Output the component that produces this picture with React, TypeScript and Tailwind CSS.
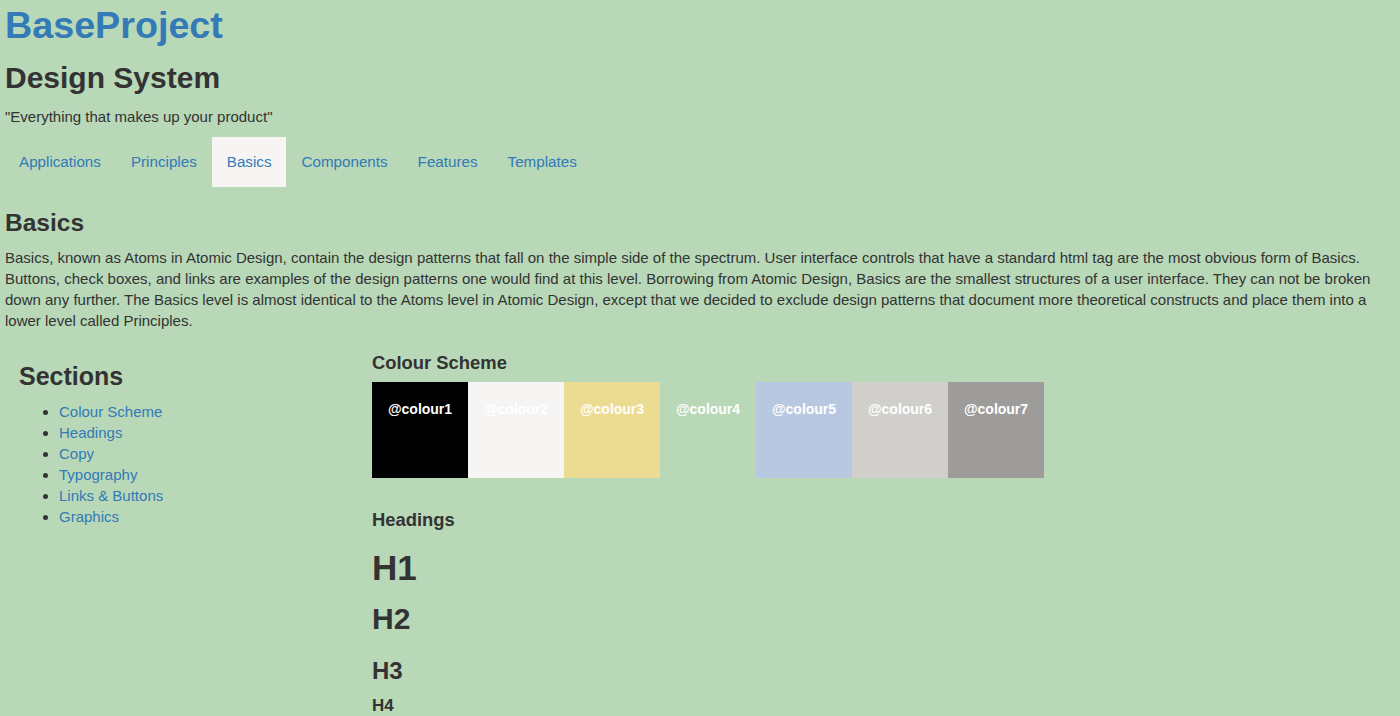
import React from 'react';

const navItems = ['Applications', 'Principles', 'Basics', 'Components', 'Features', 'Templates'];

const sections = ['Colour Scheme', 'Headings', 'Copy', 'Typography', 'Links & Buttons', 'Graphics'];

const swatches = [
  { name: '@colour1', bg: 'bg-black' },
  { name: '@colour2', bg: 'bg-[#f6f5f3]' },
  { name: '@colour3', bg: 'bg-[#ecdc91]' },
  { name: '@colour4', bg: 'bg-[#b8d8b8]' },
  { name: '@colour5', bg: 'bg-[#b8c8e0]' },
  { name: '@colour6', bg: 'bg-[#d0cfcc]' },
  { name: '@colour7', bg: 'bg-[#9e9c9a]' },
];

export default function App() {
  return (
    <div className="min-h-screen bg-[#b8d8b8] text-[#333] font-['Liberation_Sans',Arial,sans-serif] text-[15px] leading-[21px] px-[4px]">
      {/* Header */}
      <h1 className="text-[37.7px] leading-[50px] font-bold pl-[1px] text-[#337ab7]">BaseProject</h1>
      <h2 className="text-[30px] leading-[40px] font-bold mt-[8px] pl-[1px]">Design System</h2>
      <p className="mt-[8px] pl-[1px]">"Everything that makes up your product"</p>

      {/* Nav */}
      <ul className="flex mt-[10px]">
        {navItems.map((item) => (
          <li key={item}>
            <a
              href="#"
              className={
                'block px-[15px] py-[15px] leading-[20px] text-[15.2px] text-[#337ab7] ' +
                (item === 'Basics' ? 'bg-[#f6f5f3]' : '')
              }
            >
              {item}
            </a>
          </li>
        ))}
      </ul>

      {/* Intro */}
      <h3 className="text-[24.5px] leading-[30px] font-bold mt-[21px] pl-[1px]">Basics</h3>
      <p className="mt-[9px] pl-[1px] pr-[5px]">
        Basics, known as Atoms in Atomic Design, contain the design patterns that fall on the simple side of the spectrum. User interface controls that have a standard html tag are the most obvious form of Basics. Buttons, check boxes, and links are examples of the design patterns one would find at this level. Borrowing from Atomic Design, Basics are the smallest structures of a user interface. They can not be broken down any further. The Basics level is almost identical to the Atoms level in Atomic Design, except that we decided to exclude design patterns that document more theoretical constructs and place them into a lower level called Principles.
      </p>

      <div className="flex mt-[19px]">
        {/* Sidebar */}
        <div className="w-[368px] pl-[15px] pt-[10px]">
          <h3 className="text-[25px] leading-[32px] font-bold">Sections</h3>
          <ul className="list-disc pl-[40px] mt-[9px]">
            {sections.map((s) => (
              <li key={s}>
                <a href="#" className="text-[#337ab7]">{s}</a>
              </li>
            ))}
          </ul>
        </div>

        {/* Main */}
        <div className="flex-1 pt-[1px]">
          <h4 className="text-[18.4px] leading-[24px] font-bold">Colour Scheme</h4>
          <div className="flex mt-[7px]">
            {swatches.map((s) => (
              <div key={s.name} className={'w-[96px] h-[96px] pt-[17px] text-center text-white text-[14px] font-bold ' + s.bg}>
                {s.name}
              </div>
            ))}
          </div>

          <h4 className="text-[18.4px] leading-[24px] font-bold mt-[30px]">Headings</h4>
          <div className="text-[35px] leading-[44px] font-bold mt-[14px]">H1</div>
          <div className="text-[30px] leading-[38px] font-bold mt-[10px]">H2</div>
          <div className="text-[24px] leading-[30px] font-bold mt-[18px]">H3</div>
          <div className="text-[17px] leading-[22px] font-bold mt-[9px]">H4</div>
        </div>
      </div>
    </div>
  );
}
